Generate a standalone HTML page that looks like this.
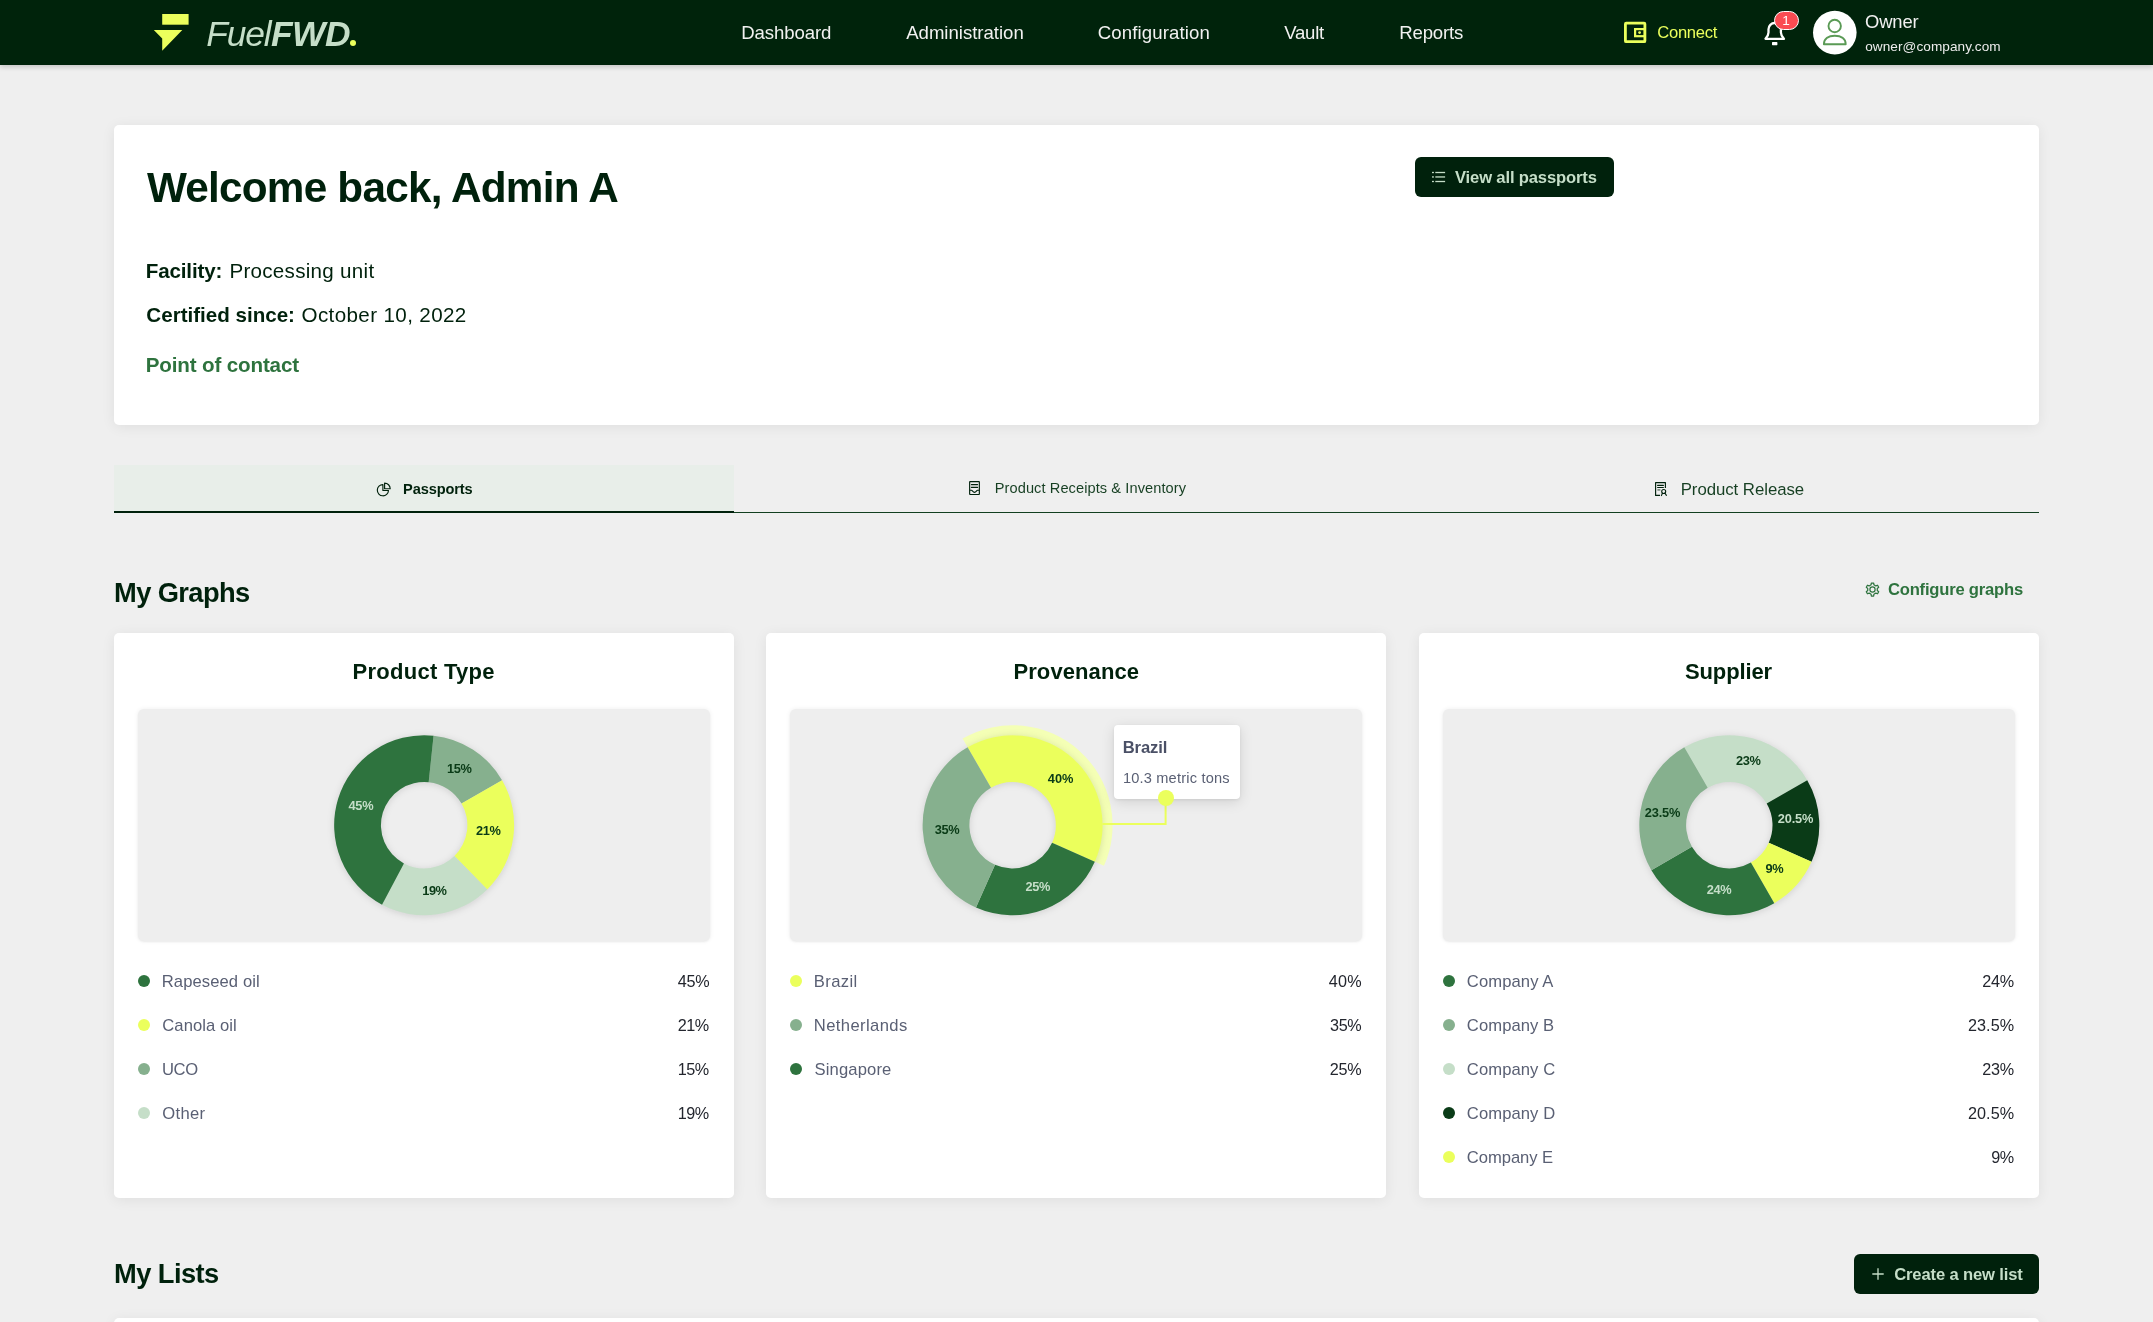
<!DOCTYPE html>
<html lang="en">
<head>
<meta charset="utf-8">
<title>FuelFWD - Dashboard</title>
<style>
*{box-sizing:border-box;margin:0;padding:0}
html,body{width:2153px;height:1322px;background:#efefef}
body{font-family:"Liberation Sans",sans-serif;position:relative;color:#00210c;-webkit-font-smoothing:antialiased}
#app{position:absolute;left:0;top:0;width:2153px;height:1322px;overflow:hidden;will-change:transform}
ul{list-style:none}
a{text-decoration:none;cursor:pointer}
.t{position:absolute;white-space:nowrap;line-height:1;font-weight:400;font-style:normal;display:block;font-family:"Liberation Sans",sans-serif;margin:0;padding:0}
button{font:inherit;color:inherit;cursor:pointer}
.ic{position:absolute;display:block;overflow:visible}
header.nav{position:absolute;left:0;top:0;width:2153px;height:65px;background:#00230b;box-shadow:0 2px 5px rgba(0,0,0,.18);z-index:5}
.logo .dotmark{position:absolute;left:349.8px;top:39.8px;width:6.4px;height:6.4px;border-radius:50%;background:#ebff5c;color:#ebff5c;font-size:6px;line-height:6.4px;overflow:hidden;text-indent:1px;font-weight:700}
.badge{position:absolute;left:1774.4px;top:10.9px;width:24.6px;height:19.3px;border-radius:10px;background:#fa4b52;border:1px solid #fff}
.card{position:absolute;background:#fff;border-radius:5px;box-shadow:0 2px 14px rgba(0,0,0,.07)}
.welcome{left:114.25px;top:125px;width:1925px;height:299.6px}
.btn{position:absolute;height:40px;border-radius:6px;background:#00210c;border:0;display:block}
.btn1{left:1300.4px;top:32px;width:199px}
.btn2{left:1854px;top:1254px;width:185px}
.tabs{position:absolute;left:114.25px;top:465px;width:1925px;height:48px;border-bottom:1px solid #123f20}
.tabs .tab{position:absolute;left:0;top:0;height:48px}
.tabs .active{left:0;width:620px;background:#e8eee9;border-bottom:2.4px solid #00210c}
.gcard{top:633px;width:620.2px;height:565px}
.chart{position:absolute;left:24px;top:75.6px;width:572.2px;height:232.4px;border-radius:6px;background:#eeeeee;box-shadow:0 0 5px rgba(0,0,0,.07),0 1px 2px rgba(0,0,0,.05)}
.donut{position:absolute;left:0;top:0;display:block;overflow:visible}
.donut text{font-family:"Liberation Sans",sans-serif}
.donut .ring{filter:drop-shadow(0 1.5px 3.5px rgba(0,0,0,.13))}
.dot{position:absolute;left:24px;width:12px;height:12px;border-radius:50%;display:block}
.tooltip{position:absolute;left:1113.5px;top:725px;width:126px;height:74px;background:#fff;border-radius:4px;box-shadow:0 3px 14px rgba(0,0,0,.12),0 1px 3px rgba(0,0,0,.07);z-index:2}
.tipdot{position:absolute;left:1157.8px;top:789.9px;width:16px;height:16px;border-radius:50%;background:#ebff5c;z-index:3}
.lists{left:114.25px;top:1318px;width:1925px;height:60px}
</style>
</head>
<body>
<div id="app">
<header class="nav">
  <a class="logo" aria-label="FuelFWD"><svg class="ic" width="38" height="40" viewBox="0 0 38 40" style="left:153px;top:13px" aria-hidden="true"><path d="M9.2 1H35.6V11.7H9.2Z" fill="#ebff5c"/><path d="M0.8 17.1H29.3L9.2 37.8V25.6Z" fill="#ebff5c"/></svg><span class="t" style="left:206.23px;top:17.00px;font-size:35.4px;letter-spacing:-1.133px;color:#c5dec8;font-style:italic">Fuel</span><span class="t" style="left:271.05px;top:17.00px;font-size:35.4px;letter-spacing:-0.583px;color:#c5dec8;font-weight:700;font-style:italic">FWD</span><span class="dotmark">.</span></a>
  <nav class="links"><a class="t" style="left:741.15px;top:24.00px;font-size:18.6px;letter-spacing:-0.096px;color:#f1f1f1">Dashboard</a><a class="t" style="left:906.20px;top:24.00px;font-size:18.6px;letter-spacing:-0.021px;color:#f1f1f1">Administration</a><a class="t" style="left:1097.63px;top:24.00px;font-size:18.6px;letter-spacing:0.134px;color:#f1f1f1">Configuration</a><a class="t" style="left:1284.30px;top:24.00px;font-size:18.6px;letter-spacing:-0.270px;color:#f1f1f1">Vault</a><a class="t" style="left:1399.35px;top:24.00px;font-size:18.6px;letter-spacing:-0.196px;color:#f1f1f1">Reports</a></nav>
  <div class="actions">
    <svg class="ic" width="26" height="26" viewBox="0 0 26 26" style="left:1623px;top:20px" aria-hidden="true"><rect x="2.4" y="3.2" width="19.5" height="18.5" rx="0.8" fill="none" stroke="#ebff5c" stroke-width="2.8"/><rect x="12.1" y="9.1" width="9.8" height="7.1" fill="none" stroke="#ebff5c" stroke-width="2.2"/><circle cx="16.6" cy="12.6" r="1.4" fill="#ebff5c"/></svg><a class="t" style="left:1657.22px;top:25.00px;font-size:16.6px;letter-spacing:-0.265px;color:#ebff5c">Connect</a>
    <svg class="ic" width="30" height="30" viewBox="0 0 30 30" style="left:1760px;top:18px" aria-hidden="true"><path d="M5.5 20.8C7.2 19 8.5 17.6 8.5 14.6V11.2A6.2 6.2 0 0 1 20.9 11.2V14.6C20.9 17.6 22.2 19 23.9 20.8Z" fill="none" stroke="#fff" stroke-width="2.3" stroke-linejoin="round"/><rect x="12" y="24.1" width="5.4" height="3.1" rx="0.6" fill="#fff"/></svg><span class="badge"></span><span class="t" style="left:1782.35px;top:14.00px;font-size:13.6px;letter-spacing:0.000px;color:#ffffff">1</span>
    <svg class="ic" width="44" height="44" viewBox="0 0 44 44" style="left:1813px;top:10.8px" aria-hidden="true"><circle cx="21.8" cy="21.6" r="21.8" fill="#fff"/><circle cx="21.7" cy="15" r="6.2" fill="none" stroke="#5a9a55" stroke-width="1.9"/><path d="M10.9 33.2C10.9 27.4 15.6 24.7 21.8 24.7C28 24.7 32.7 27.4 32.7 33.2Z" fill="none" stroke="#5a9a55" stroke-width="1.9" stroke-linejoin="round"/></svg><span class="t" style="left:1865.04px;top:13.00px;font-size:18.4px;letter-spacing:-0.155px;color:#f1f1f1">Owner</span><span class="t" style="left:1865.17px;top:40.00px;font-size:13.6px;letter-spacing:0.068px;color:#ececec">owner@company.com</span>
  </div>
</header>
<main>
  <section class="card welcome">
    <h1 class="t" style="left:32.65px;top:42.00px;font-size:42.3px;letter-spacing:-0.776px;color:#00210c;font-weight:700">Welcome back, Admin A</h1>
    <p><b class="t" style="left:31.46px;top:136.00px;font-size:20.6px;letter-spacing:-0.135px;color:#00210c;font-weight:700">Facility:</b><span class="t" style="left:115.14px;top:136.00px;font-size:20.6px;letter-spacing:0.284px;color:#00210c">Processing unit</span></p>
    <p><b class="t" style="left:32.11px;top:180.00px;font-size:20.6px;letter-spacing:-0.012px;color:#00210c;font-weight:700">Certified since:</b><span class="t" style="left:187.28px;top:180.00px;font-size:20.6px;letter-spacing:0.377px;color:#00210c">October 10, 2022</span></p>
    <a class="t" style="left:31.46px;top:230.00px;font-size:20.6px;letter-spacing:-0.147px;color:#2e733e;font-weight:700">Point of contact</a>
    <button class="btn btn1" type="button"><svg class="ic" width="16" height="14" viewBox="0 0 16 14" style="left:16.6px;top:13px" aria-hidden="true"><rect x="1" y="1.85" width="1.9" height="1.3" fill="#c5dec8"/><rect x="4.3" y="1.85" width="9.8" height="1.3" fill="#c5dec8"/><rect x="1" y="6.30" width="1.9" height="1.3" fill="#c5dec8"/><rect x="4.3" y="6.30" width="9.8" height="1.3" fill="#c5dec8"/><rect x="1" y="10.85" width="1.9" height="1.3" fill="#c5dec8"/><rect x="4.3" y="10.85" width="9.8" height="1.3" fill="#c5dec8"/></svg><span class="t" style="left:40.35px;top:13.00px;font-size:16.6px;letter-spacing:-0.152px;color:#c5dec8;font-weight:700">View all passports</span></button>
  </section>
  <div class="tabs" role="tablist">
    <div class="tab active" role="tab" aria-selected="true"><svg class="ic" width="16" height="16" viewBox="0 0 16 16" style="left:262px;top:16.7px" aria-hidden="true"><path d="M6.9 2.6A5.6 5.6 0 1 0 12.5 8.5H6.9Z" fill="none" stroke="#00210c" stroke-width="1.15" stroke-linejoin="round"/><path d="M8.6 1.1A5.6 5.6 0 0 1 14.2 6.7H8.6Z" fill="none" stroke="#00210c" stroke-width="1.15" stroke-linejoin="round"/></svg><span class="t" style="left:288.84px;top:17.00px;font-size:14.6px;letter-spacing:-0.134px;color:#00210c;font-weight:700">Passports</span></div>
    <div class="tab" role="tab" aria-selected="false"><svg class="ic" width="14" height="16" viewBox="0 0 14 16" style="left:854px;top:15px" aria-hidden="true"><rect x="1.65" y="1.55" width="9.7" height="12.9" rx="0.4" fill="none" stroke="#00210c" stroke-width="1.15"/><path d="M3.4 4.6H9.6M3.4 7.4H9.6" stroke="#00210c" stroke-width="1.1" stroke-linecap="round"/><path d="M1.7 10.3H3.4C4.6 10.3 4.7 12.4 6.5 12.4C8.3 12.4 8.4 10.3 9.6 10.3H11.3" fill="none" stroke="#00210c" stroke-width="1.1"/></svg><span class="t" style="left:880.51px;top:16.00px;font-size:14.6px;letter-spacing:0.083px;color:#163f22">Product Receipts &amp; Inventory</span></div>
    <div class="tab" role="tab" aria-selected="false"><svg class="ic" width="14" height="16" viewBox="0 0 14 16" style="left:1540px;top:16px" aria-hidden="true"><path d="M6 14.4H1.6V1.6H11.4V7" fill="none" stroke="#00210c" stroke-width="1.15" stroke-linejoin="round"/><path d="M3.6 4.4H9.4M3.6 6.5H9.4" stroke="#00210c" stroke-width="1.1" stroke-linecap="round"/><path d="M3.4 8.9H6.4" stroke="#00210c" stroke-width="1.4" opacity=".6"/><circle cx="9.7" cy="10.5" r="2" fill="none" stroke="#00210c" stroke-width="1.1"/><path d="M8.4 12.2L7.4 14.6M11 12.2L12.4 14.4" stroke="#00210c" stroke-width="1.1" stroke-linecap="round"/></svg><span class="t" style="left:1566.44px;top:17.00px;font-size:16.8px;letter-spacing:-0.042px;color:#163f22">Product Release</span></div>
  </div>
  <section class="graphs">
    <h2 class="t" style="left:114.09px;top:579.00px;font-size:27.3px;letter-spacing:-0.621px;color:#00210c;font-weight:700">My Graphs</h2>
    <svg class="ic" width="15" height="15" viewBox="0 0 15 15" style="left:1864.8px;top:581.9px" aria-hidden="true"><path d="M6.07 2.81L6.35 1.00L8.65 1.00L8.93 2.81L10.84 3.92L12.56 3.26L13.70 5.24L12.27 6.40L12.27 8.60L13.70 9.76L12.56 11.74L10.84 11.08L8.93 12.19L8.65 14.00L6.35 14.00L6.07 12.19L4.16 11.08L2.44 11.74L1.30 9.76L2.73 8.60L2.73 6.40L1.30 5.24L2.44 3.26L4.16 3.92Z" fill="none" stroke="#2e733e" stroke-width="1.25" stroke-linejoin="round"/><circle cx="7.5" cy="7.5" r="2.6" fill="none" stroke="#2e733e" stroke-width="1.2"/></svg><a class="t" style="left:1887.98px;top:582.00px;font-size:16.6px;letter-spacing:-0.207px;color:#2e733e;font-weight:700">Configure graphs</a>
    <article class="card gcard" style="left:114.25px">
      <h3 class="t" style="left:238.27px;top:28.00px;font-size:22px;letter-spacing:0.279px;color:#00210c;font-weight:700">Product Type</h3>
      <div class="chart"><svg class="donut" width="573" height="232" viewBox="138.25 708.6 573 232" role="img" aria-label="Product Type"><g class="ring"><path d="M433.81 735.29A90.0 90.0 0 0 1 502.34 779.80L461.81 803.20A43.2 43.2 0 0 0 428.92 781.84Z" fill="#86b08e"/><path d="M502.34 779.80A90.0 90.0 0 0 1 487.48 888.99L454.68 855.61A43.2 43.2 0 0 0 461.81 803.20Z" fill="#ebff5c"/><path d="M487.48 888.99A90.0 90.0 0 0 1 382.29 904.34L404.19 862.98A43.2 43.2 0 0 0 454.68 855.61Z" fill="#c5dec8"/><path d="M382.29 904.34A90.0 90.0 0 0 1 433.81 735.29L428.92 781.84A43.2 43.2 0 0 0 404.19 862.98Z" fill="#2e733e"/></g></svg><span class="t" style="left:210.20px;top:91.40px;font-size:12.8px;letter-spacing:-0.272px;color:#c5dec8;font-weight:700">45%</span><span class="t" style="left:308.86px;top:54.40px;font-size:12.8px;letter-spacing:-0.410px;color:#0a3b17;font-weight:700">15%</span><span class="t" style="left:337.76px;top:116.40px;font-size:12.8px;letter-spacing:-0.410px;color:#0a3b17;font-weight:700">21%</span><span class="t" style="left:283.96px;top:176.40px;font-size:12.8px;letter-spacing:-0.410px;color:#0a3b17;font-weight:700">19%</span></div>
      <ul class="legend"><li><i class="dot" style="top:342.0px;background:#2e733e"></i><span class="t" style="left:47.55px;top:341.00px;font-size:16.6px;letter-spacing:0.092px;color:#5a6074">Rapeseed oil</span><span class="t" style="left:563.50px;top:340.00px;font-size:16.2px;letter-spacing:-0.235px;color:#23262e">45%</span></li><li><i class="dot" style="top:386.0px;background:#ebff5c"></i><span class="t" style="left:48.07px;top:385.00px;font-size:16.6px;letter-spacing:0.064px;color:#5a6074">Canola oil</span><span class="t" style="left:563.46px;top:384.00px;font-size:16.2px;letter-spacing:-0.518px;color:#23262e">21%</span></li><li><i class="dot" style="top:430.0px;background:#86b08e"></i><span class="t" style="left:47.81px;top:429.00px;font-size:16.6px;letter-spacing:-0.408px;color:#5a6074">UCO</span><span class="t" style="left:563.46px;top:428.00px;font-size:16.2px;letter-spacing:-0.518px;color:#23262e">15%</span></li><li><i class="dot" style="top:474.0px;background:#c5dec8"></i><span class="t" style="left:48.07px;top:473.00px;font-size:16.6px;letter-spacing:0.311px;color:#5a6074">Other</span><span class="t" style="left:563.46px;top:472.00px;font-size:16.2px;letter-spacing:-0.518px;color:#23262e">19%</span></li></ul>
    </article>
    <article class="card gcard" style="left:766.2px">
      <h3 class="t" style="left:247.22px;top:28.00px;font-size:22px;letter-spacing:0.099px;color:#00210c;font-weight:700">Provenance</h3>
      <div class="chart"><svg class="donut" width="573" height="232" viewBox="790.2 708.6 573 232" role="img" aria-label="Provenance"><path d="M962.80 738.20A100 100 0 0 1 1104.15 865.47L1094.56 861.20A89.5 89.5 0 0 0 968.05 747.29Z" fill="#f4ffb5"/><g class="ring"><path d="M967.80 746.86A90.0 90.0 0 0 1 1095.02 861.41L1052.27 842.37A43.2 43.2 0 0 0 991.20 787.39Z" fill="#ebff5c"/><path d="M1095.02 861.41A90.0 90.0 0 0 1 976.19 907.02L995.23 864.27A43.2 43.2 0 0 0 1052.27 842.37Z" fill="#2e733e"/><path d="M976.19 907.02A90.0 90.0 0 0 1 967.80 746.86L991.20 787.39A43.2 43.2 0 0 0 995.23 864.27Z" fill="#86b08e"/></g><path d="M1102.5 823.5H1165.8V798" fill="none" stroke="#ebff5c" stroke-width="2"/></svg><span class="t" style="left:257.55px;top:64.40px;font-size:12.8px;letter-spacing:0.028px;color:#0a3b17;font-weight:700">40%</span><span class="t" style="left:144.54px;top:115.40px;font-size:12.8px;letter-spacing:-0.410px;color:#0a3b17;font-weight:700">35%</span><span class="t" style="left:235.20px;top:172.40px;font-size:12.8px;letter-spacing:-0.347px;color:#c5dec8;font-weight:700">25%</span></div>
      <ul class="legend"><li><i class="dot" style="top:342.0px;background:#ebff5c"></i><span class="t" style="left:47.55px;top:341.00px;font-size:16.6px;letter-spacing:0.408px;color:#5a6074">Brazil</span><span class="t" style="left:562.55px;top:340.00px;font-size:16.2px;letter-spacing:0.315px;color:#23262e">40%</span></li><li><i class="dot" style="top:386.0px;background:#86b08e"></i><span class="t" style="left:47.55px;top:385.00px;font-size:16.6px;letter-spacing:0.408px;color:#5a6074">Netherlands</span><span class="t" style="left:563.79px;top:384.00px;font-size:16.2px;letter-spacing:-0.309px;color:#23262e">35%</span></li><li><i class="dot" style="top:430.0px;background:#2e733e"></i><span class="t" style="left:48.33px;top:429.00px;font-size:16.6px;letter-spacing:0.148px;color:#5a6074">Singapore</span><span class="t" style="left:563.54px;top:428.00px;font-size:16.2px;letter-spacing:-0.182px;color:#23262e">25%</span></li></ul>
    </article>
    <article class="card gcard" style="left:1418.8px">
      <h3 class="t" style="left:266.16px;top:28.00px;font-size:22px;letter-spacing:-0.123px;color:#00210c;font-weight:700">Supplier</h3>
      <div class="chart"><svg class="donut" width="573" height="232" viewBox="1442.8 708.6 573 232" role="img" aria-label="Supplier"><g class="ring"><path d="M1684.10 746.86A90.0 90.0 0 0 1 1807.04 779.80L1766.51 803.20A43.2 43.2 0 0 0 1707.50 787.39Z" fill="#c5dec8"/><path d="M1807.04 779.80A90.0 90.0 0 0 1 1811.32 861.41L1768.57 842.37A43.2 43.2 0 0 0 1766.51 803.20Z" fill="#0a3b17"/><path d="M1811.32 861.41A90.0 90.0 0 0 1 1774.10 902.74L1750.70 862.21A43.2 43.2 0 0 0 1768.57 842.37Z" fill="#ebff5c"/><path d="M1774.10 902.74A90.0 90.0 0 0 1 1651.16 869.80L1691.69 846.40A43.2 43.2 0 0 0 1750.70 862.21Z" fill="#2e733e"/><path d="M1651.16 869.80A90.0 90.0 0 0 1 1684.10 746.86L1707.50 787.39A43.2 43.2 0 0 0 1691.69 846.40Z" fill="#86b08e"/></g></svg><span class="t" style="left:293.10px;top:46.40px;font-size:12.8px;letter-spacing:-0.347px;color:#0a3b17;font-weight:700">23%</span><span class="t" style="left:334.90px;top:104.40px;font-size:12.8px;letter-spacing:-0.141px;color:#c5dec8;font-weight:700">20.5%</span><span class="t" style="left:322.77px;top:154.40px;font-size:12.8px;letter-spacing:-0.410px;color:#0a3b17;font-weight:700">9%</span><span class="t" style="left:263.90px;top:175.40px;font-size:12.8px;letter-spacing:-0.397px;color:#c5dec8;font-weight:700">24%</span><span class="t" style="left:201.90px;top:98.40px;font-size:12.8px;letter-spacing:-0.141px;color:#0a3b17;font-weight:700">23.5%</span></div>
      <ul class="legend"><li><i class="dot" style="top:342.0px;background:#2e733e"></i><span class="t" style="left:48.07px;top:341.00px;font-size:16.6px;letter-spacing:0.096px;color:#5a6074">Company A</span><span class="t" style="left:563.34px;top:340.00px;font-size:16.2px;letter-spacing:-0.232px;color:#23262e">24%</span></li><li><i class="dot" style="top:386.0px;background:#86b08e"></i><span class="t" style="left:48.07px;top:385.00px;font-size:16.6px;letter-spacing:0.078px;color:#5a6074">Company B</span><span class="t" style="left:549.24px;top:384.00px;font-size:16.2px;letter-spacing:0.034px;color:#23262e">23.5%</span></li><li><i class="dot" style="top:430.0px;background:#c5dec8"></i><span class="t" style="left:48.07px;top:429.00px;font-size:16.6px;letter-spacing:0.085px;color:#5a6074">Company C</span><span class="t" style="left:563.34px;top:428.00px;font-size:16.2px;letter-spacing:-0.232px;color:#23262e">23%</span></li><li><i class="dot" style="top:474.0px;background:#0a3b17"></i><span class="t" style="left:48.07px;top:473.00px;font-size:16.6px;letter-spacing:0.085px;color:#5a6074">Company D</span><span class="t" style="left:549.24px;top:472.00px;font-size:16.2px;letter-spacing:0.034px;color:#23262e">20.5%</span></li><li><i class="dot" style="top:518.0px;background:#ebff5c"></i><span class="t" style="left:48.07px;top:517.00px;font-size:16.6px;letter-spacing:-0.047px;color:#5a6074">Company E</span><span class="t" style="left:572.39px;top:516.00px;font-size:16.2px;letter-spacing:-0.518px;color:#23262e">9%</span></li></ul>
    </article>
    <div class="tooltip" role="tooltip"><b class="t" style="left:9.26px;top:15.00px;font-size:16.6px;letter-spacing:-0.134px;color:#4a5066;font-weight:700">Brazil</b><span class="t" style="left:9.39px;top:46.00px;font-size:14.6px;letter-spacing:0.189px;color:#5a6074">10.3 metric tons</span></div>
    <i class="tipdot"></i>
  </section>
  <section class="mylists">
    <h2 class="t" style="left:114.09px;top:1260.00px;font-size:27.3px;letter-spacing:-0.587px;color:#00210c;font-weight:700">My Lists</h2>
    <button class="btn btn2" type="button"><svg class="ic" width="14" height="14" viewBox="0 0 14 14" style="left:17.1px;top:13.25px" aria-hidden="true"><path d="M7 1.3V12.7M1.3 7H12.7" stroke="#c5dec8" stroke-width="1.3"/></svg><span class="t" style="left:40.23px;top:13.00px;font-size:16.6px;letter-spacing:-0.148px;color:#c5dec8;font-weight:700">Create a new list</span></button>
    <div class="card lists"></div>
  </section>
</main>
</div>
</body>
</html>
